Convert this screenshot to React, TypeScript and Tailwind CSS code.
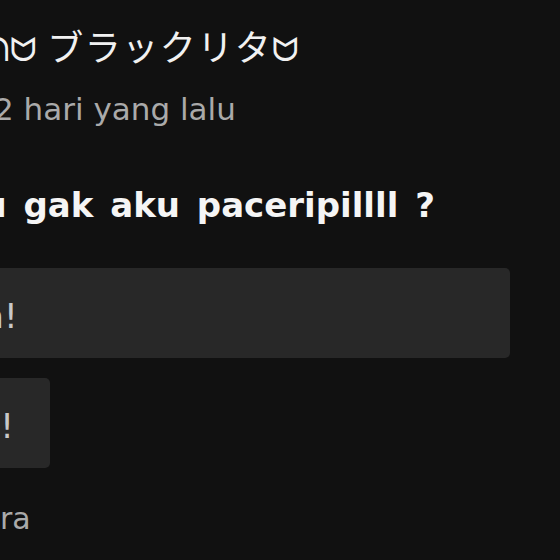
const options = [
  { label: "Iya!", width: "w-[563px]" },
  { label: "Ga!", width: "w-[103px]" },
];

export default function App() {
  return (
    <div className="min-h-screen w-full overflow-hidden bg-[#111111] font-['DejaVu_Sans','Noto_Sans_CJK_JP',sans-serif]">
      <div className="-ml-[53px] flex w-[640px] flex-col pt-[27px] whitespace-nowrap">
        <h1 className="flex h-[36px] items-baseline pl-[9px] leading-none text-[#f1f1f1]">
          <span className="text-[32px]">ᓚᘏᗢ</span>
          <span className="ml-[10px] font-['Noto_Sans_CJK_JP',sans-serif] text-[36px] tracking-[1.5px]">
            ブラックリタ
          </span>
          <span className="text-[32px]">ᗢ</span>
        </h1>
        <p className="mt-[28px] pl-[47px] text-[31px] leading-[36px] text-[#aaaaaa]">
          2 hari yang lalu
        </p>
        <p className="mt-[56px] text-[34px] font-bold leading-[44px] text-[#f5f5f5] [word-spacing:5px]">
          mu gak aku paceripillll ?
        </p>
        <div className="mt-[41px] flex flex-col gap-[20px]">
          {options.map((o) => (
            <div
              key={o.label}
              className={`${o.width} h-[90px] rounded-[5px] bg-[#282828] pl-[6px] pt-[28px] text-[34px] leading-[40px] text-[#c8c8c8]`}
            >
              {o.label}
            </div>
          ))}
        </div>
        <p className="mt-[33px] text-[30px] leading-[36px] text-[#aaaaaa]">suara</p>
      </div>
    </div>
  );
}
